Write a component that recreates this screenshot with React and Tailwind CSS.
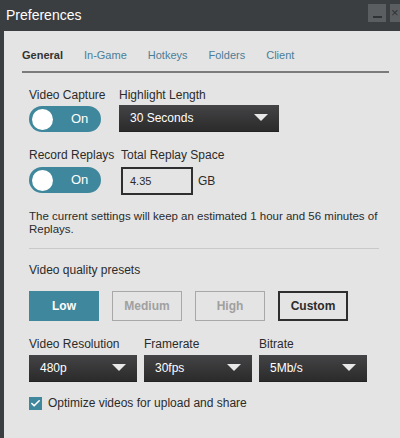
import { Check } from "lucide-react";

function Toggle() {
  return (
    <div className="flex items-center w-[72px] h-[26px] rounded-full bg-[#3f879c] pl-[3px]">
      <div className="w-[21px] h-[21px] rounded-full bg-white" />
      <span className="ml-[18px] text-[13px] text-white">On</span>
    </div>
  );
}

function Select({ value, width }) {
  return (
    <div
      className={`flex items-center justify-between h-[27px] px-[11px] bg-gradient-to-b from-[#444446] to-[#2b2b2c] border-b border-[#222] text-white text-[12px] ${width}`}
    >
      <span>{value}</span>
      <svg width="14" height="8" viewBox="0 0 14 8">
        <path d="M0 0 L14 0 L7 7 Z" fill="#e8e8e8" />
      </svg>
    </div>
  );
}

export default function App() {
  const tabs = ["General", "In-Game", "Hotkeys", "Folders", "Client"];
  return (
    <div
      className="w-[400px] h-[438px] bg-[#3b3e41] flex flex-col overflow-hidden"
      style={{ fontFamily: "Tahoma, 'Liberation Sans', Arial, sans-serif" }}
    >
      {/* title bar */}
      <div className="h-[31px] flex items-center justify-between shrink-0">
        <span className="ml-[6px] text-white text-[14px]">Preferences</span>
        <div className="flex gap-[4px] self-start mt-[4px]">
          <div className="w-[18px] h-[18px] bg-[#5b5e61] flex items-end justify-center pb-[4px]">
            <div className="w-[9px] h-[2px] bg-[#2f3133]" />
          </div>
          <div className="w-[10px] h-[18px] bg-[#5b5e61] text-[#2f3133] text-[13px] leading-[18px] pl-[1px]">×</div>
        </div>
      </div>

      {/* panel */}
      <div className="flex-1 ml-[4px] bg-[#e4e4e4] pl-[18px] pr-[11px] pt-[15px] text-[12px] text-[#2b2b2b]">
        <div className="flex gap-[21px] border-b-2 border-[#7b7b7b] pb-[7px] text-[11px] leading-[18px]">
          {tabs.map((t, i) => (
            <span key={t} className={i === 0 ? "font-bold text-[#333]" : "text-[#4c7d97]"}>
              {t}
            </span>
          ))}
        </div>

        <div className="pl-[7px] pr-[8px]">
          <div className="flex mt-[13px]">
            <div className="flex flex-col gap-[2px] w-[90px]">
              <span>Video Capture</span>
              <Toggle />
            </div>
            <div className="flex flex-col gap-[1px]">
              <span>Highlight Length</span>
              <Select value="30 Seconds" width="w-[160px]" />
            </div>
          </div>

          <div className="flex mt-[14px]">
            <div className="flex flex-col gap-[3px] w-[92px]">
              <span>Record Replays</span>
              <Toggle />
            </div>
            <div className="flex flex-col gap-[3px]">
              <span>Total Replay Space</span>
              <div className="flex items-center gap-[5px]">
                <div className="w-[72px] h-[28px] border-2 border-[#2f2f2f] flex items-center pl-[7px] text-[11px]">
                  4.35
                </div>
                <span>GB</span>
              </div>
            </div>
          </div>

          <p className="mt-[15px] leading-[13px] text-[11.5px]">
            The current settings will keep an estimated 1 hour and 56 minutes of Replays.
          </p>

          <div className="border-t border-[#c9c9c9] mt-[12px] mr-[2px]" />

          <div className="mt-[12px]">Video quality presets</div>

          <div className="flex gap-[13px] mt-[12px] text-[12px] font-bold">
            <div className="w-[70px] h-[30px] bg-[#3f879c] text-white flex items-center justify-center">Low</div>
            <div className="w-[70px] h-[30px] border border-[#a8a8a8] text-[#a0a0a0] flex items-center justify-center">Medium</div>
            <div className="w-[70px] h-[30px] border border-[#a8a8a8] text-[#a0a0a0] flex items-center justify-center">High</div>
            <div className="w-[70px] h-[30px] border-2 border-[#2f2f2f] text-[#2b2b2b] flex items-center justify-center">Custom</div>
          </div>

          <div className="flex gap-[7px] mt-[14px]">
            <div className="flex flex-col gap-[2px]">
              <span>Video Resolution</span>
              <Select value="480p" width="w-[108px]" />
            </div>
            <div className="flex flex-col gap-[2px]">
              <span>Framerate</span>
              <Select value="30fps" width="w-[108px]" />
            </div>
            <div className="flex flex-col gap-[2px]">
              <span>Bitrate</span>
              <Select value="5Mb/s" width="w-[108px]" />
            </div>
          </div>

          <div className="flex items-center gap-[6px] mt-[12px]">
            <div className="w-[13px] h-[13px] bg-[#3f879c] flex items-center justify-center">
              <Check size={11} strokeWidth={3.5} color="white" />
            </div>
            <span>Optimize videos for upload and share</span>
          </div>
        </div>
      </div>
    </div>
  );
}
